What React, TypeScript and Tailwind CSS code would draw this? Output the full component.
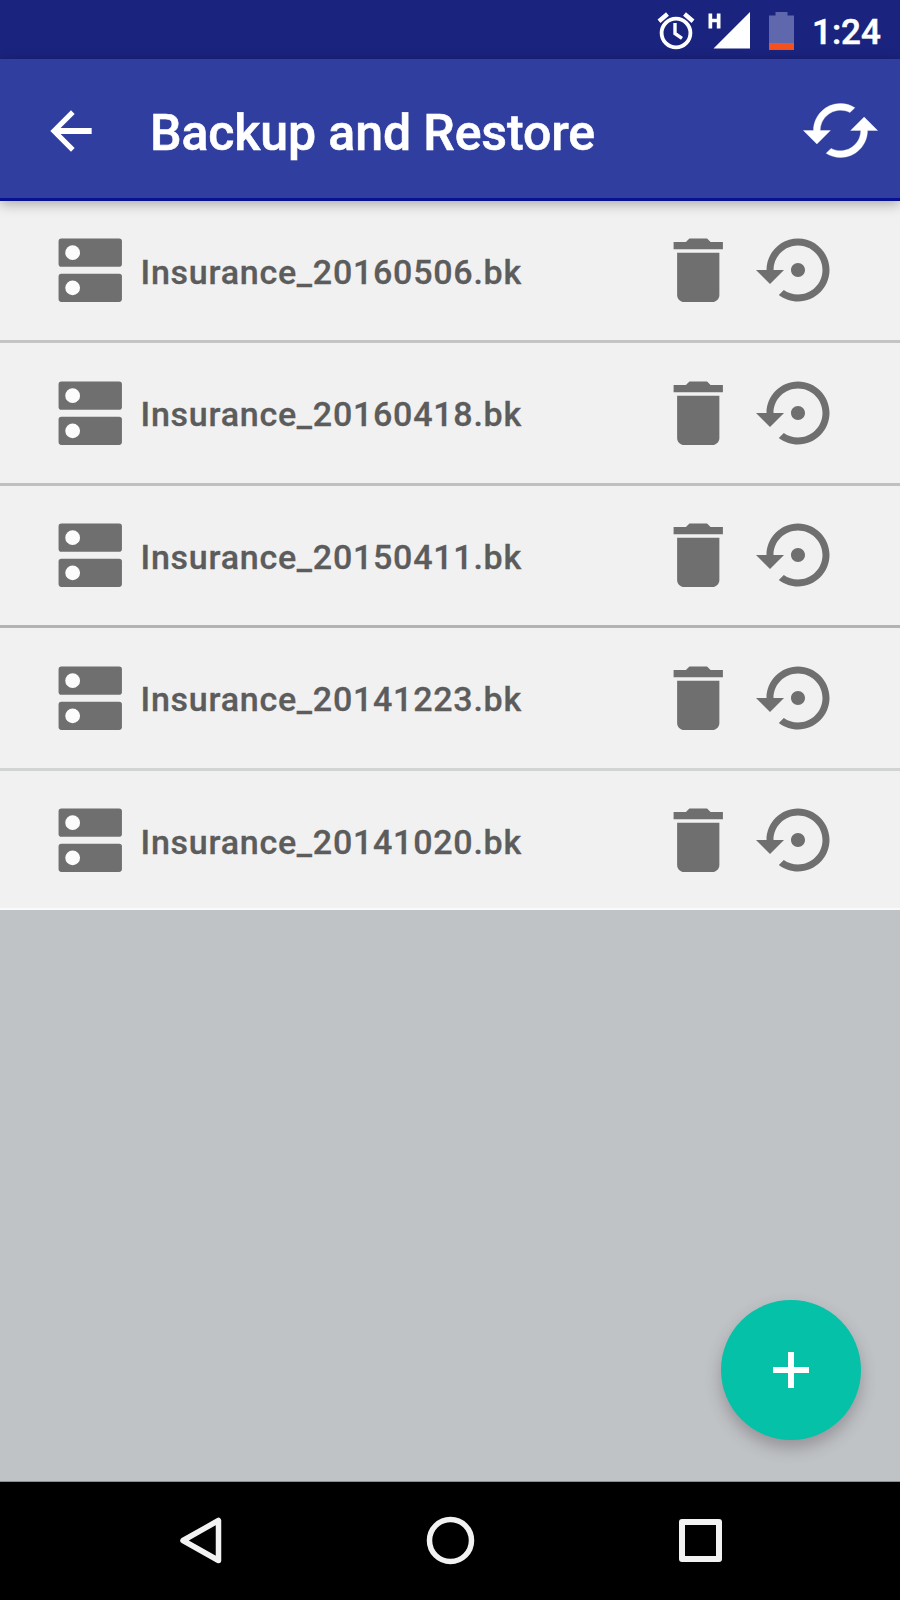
const backups = [
  { name: "Insurance_20160506.bk", line: "bg-[#c4c4c4]" },
  { name: "Insurance_20160418.bk", line: "bg-[#bfc0c0]" },
  { name: "Insurance_20150411.bk", line: "bg-[#b2b3b3]" },
  { name: "Insurance_20141223.bk", line: "bg-[#d2d4d3]" },
  { name: "Insurance_20141020.bk", line: "hidden" },
];

function StatusBar() {
  return (
    <div className="flex h-[59px] shrink-0 items-start bg-[#1a237e] pl-[657px]">
      <svg className="mt-3 h-[38px] w-[38px]" viewBox="0 0 38 38" fill="none" stroke="#fff">
        <circle cx="19" cy="21" r="14.4" strokeWidth="3.8" />
        <path d="M18 11v10.5l7 4.800" strokeWidth="3.400" />
        <path d="M2 9.200 10.500 2M27.500 2l8.500 7.200" strokeWidth="4.400" />
      </svg>
      <svg className="ml-[13px] mt-3 h-[38px] w-[44px]" viewBox="0 0 44 38" fill="#fff">
        <path d="M5.500 36.500H42V0z" />
        <path d="M0.500 1.500h3.700v5.200h4.600V1.500h3.700v15H8.800v-6.200H4.200v6.200H0.500z" />
      </svg>
      <svg className="ml-[17px] mt-3 h-[38px] w-[26px]" viewBox="0 0 26 38">
        <path d="M6.500 0h12v3.500H25V31H0V3.500h6.500z" fill="#6068ad" />
        <path d="M0 31h25v7H0z" fill="#f4511e" />
      </svg>
      <span className="ml-[17px] mt-[12px] text-[35px] font-medium leading-[42px] text-white [-webkit-text-stroke:0.5px_#fff]">
        1:24
      </span>
    </div>
  );
}

function AppBar() {
  return (
    <header className="relative z-10 flex h-[142px] shrink-0 items-center border-b-[3px] border-[#08118f] bg-[#303f9f] pl-10 shadow-[0_3px_12px_rgba(0,0,0,0.3)]">
      <svg className="mt-[4px] h-[62px] w-[62px]" viewBox="0 0 24 24" fill="#fff">
        <path d="M20 10.850H7.980l5.440-5.440L12 4l-8 8 8 8 1.410-1.410L7.980 13.150H20z" />
      </svg>
      <h1 className="ml-[48px] mt-[9px] w-[650px] text-[50px] font-medium leading-[60px] tracking-[-0.1px] text-white [-webkit-text-stroke:0.6px_#fff]">
        Backup and Restore
      </h1>
      <svg className="mt-[4px] h-[81px] w-[81px] shrink-0" viewBox="0 0 24 24" fill="#fff" stroke="#fff" strokeWidth="0.1">
        <path d="M19 8l-4 4h3c0 3.310-2.690 6-6 6-1.010 0-1.970-.25-2.800-.7l-1.460 1.460C8.970 19.540 10.430 20 12 20c4.420 0 8-3.580 8-8h3l-4-4zM6 12c0-3.310 2.690-6 6-6 1.010 0 1.970.25 2.800.7l1.460-1.460C15.030 4.460 13.570 4 12 4c-4.420 0-8 3.580-8 8H1l4 4 4-4H6z" />
      </svg>
    </header>
  );
}

function BackupRow({ name, line }: { name: string; line: string }) {
  return (
    <li className="flex flex-col last:shadow-[inset_0_-2px_0_#fafafa]">
      <div className="flex h-[139.500px] items-center pl-[48px] text-[#6f6f6f]">
        <svg className="h-[84.500px] w-[84.500px] shrink-0" viewBox="0 0 24 24">
          <rect x="3" y="3" width="18" height="8" rx="0.8" fill="currentColor" />
          <rect x="3" y="13" width="18" height="8" rx="0.8" fill="currentColor" />
          <circle cx="7" cy="7" r="2.100" fill="#fcfcfc" />
          <circle cx="7" cy="17" r="2.100" fill="#fcfcfc" />
        </svg>
        <span className="ml-[8px] mt-[3px] w-[515px] text-[34px] font-medium leading-10 tracking-[0.75px] text-[#5c5c5c] [-webkit-text-stroke:0.3px_#5c5c5c]">
          {name}
        </span>
        <svg className="h-[84.500px] w-[84.500px] shrink-0" viewBox="0 0 24 24" fill="currentColor">
          <path d="M6 19c0 1.100.9 2 2 2h8c1.100 0 2-.9 2-2V7H6v12zM19 4h-3.500l-1-1h-5l-1 1H5v2h14V4z" />
        </svg>
        <svg className="ml-[16px] h-[84px] w-[84px] shrink-0" viewBox="0 0 24 24" fill="currentColor">
          <path d="M14 12c0-1.100-.9-2-2-2s-2 .9-2 2 .9 2 2 2 2-.9 2-2zm-2-9c-4.970 0-9 4.030-9 9H0l4 4 4-4H5c0-3.870 3.130-7 7-7s7 3.130 7 7-3.130 7-7 7c-1.510 0-2.910-.49-4.060-1.300l-1.420 1.440C8.040 20.300 9.940 21 12 21c4.970 0 9-4.030 9-9s-4.030-9-9-9z" />
        </svg>
      </div>
      <div className={`h-[3px] shrink-0 ${line}`} />
    </li>
  );
}

function NavBar() {
  return (
    <nav className="flex h-[118px] shrink-0 items-center bg-black pl-[178px]">
      <svg className="h-[50px] w-[46px]" viewBox="0 0 46 50" fill="none" stroke="#f2f2f2" strokeWidth="5.500" strokeLinejoin="round">
        <path d="M5 24.500 40.500 4.500v40z" />
      </svg>
      <svg className="ml-[201px] h-[50px] w-[50px]" viewBox="0 0 50 50" fill="none" stroke="#f2f2f2" strokeWidth="5.500">
        <circle cx="25.500" cy="24.500" r="21" />
      </svg>
      <svg className="ml-[201px] h-[50px] w-[50px]" viewBox="0 0 50 50" fill="none" stroke="#f2f2f2" strokeWidth="6" strokeLinejoin="round">
        <rect x="6" y="6" width="37" height="37" />
      </svg>
    </nav>
  );
}

export default function App() {
  return (
    <div className="relative flex h-[1600px] w-[900px] flex-col overflow-hidden bg-[#bfc3c6] font-['Roboto',sans-serif]">
      <StatusBar />
      <AppBar />
      <main className="flex-1 border-b border-[#8b8f91]">
        <ul className="-mt-[0.5px] bg-[#f1f1f1]">
          {backups.map((b) => (
            <BackupRow key={b.name} name={b.name} line={b.line} />
          ))}
        </ul>
      </main>
      <button
        aria-label="Add backup"
        className="absolute left-[721px] top-[1300px] flex h-[140px] w-[140px] items-center justify-center rounded-full bg-[#04c1a8] shadow-[0_8px_16px_rgba(60,40,50,0.3)]"
      >
        <svg className="h-[38px] w-[38px]" viewBox="0 0 38 38" stroke="#fff" strokeWidth="6">
          <path d="M1 19h36M19 1v36" />
        </svg>
      </button>
      <NavBar />
    </div>
  );
}
